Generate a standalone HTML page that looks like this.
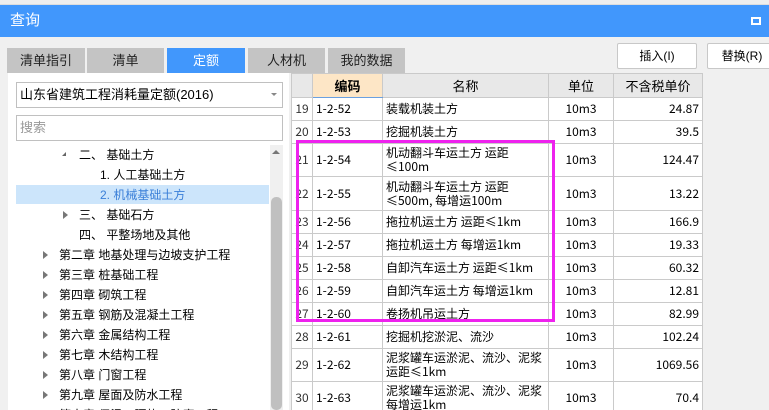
<!DOCTYPE html><html style="width:769px;height:410px;overflow:hidden"><head><meta charset="utf-8"><style>
*{box-sizing:border-box;margin:0;padding:0}
body{width:769px;height:410px;overflow:hidden;background:#f0f0f0;font-family:"Liberation Sans","Noto Sans CJK SC",sans-serif;font-size:12px;color:#000;position:relative}
.a{position:absolute}
.tab{position:absolute;top:48px;height:25px;background:#c4c4c4;text-align:center;line-height:25px;font-size:13px;color:#222}
.btn{position:absolute;top:43px;height:26px;background:#fff;border:1px solid #c8c8c8;border-radius:2px;text-align:center;line-height:24px;font-size:12px}
.tr{position:absolute;left:0;font-size:12px;white-space:nowrap;height:20px;line-height:20px}
.arr{position:absolute;width:0;height:0;border-top:4px solid transparent;border-bottom:4px solid transparent;border-left:5px solid #777}
table{position:absolute;left:291px;top:73px;border-collapse:collapse;background:#fff;font-family:"Noto Sans CJK SC",sans-serif;font-size:12px}
td,th{border:1px solid #cacaca;padding:0 3px;line-height:14px;font-weight:normal}
th{background:#e8e8e8;height:24px;font-size:13px}
td.n{text-align:center;color:#333;padding:0 1px}
td.u{text-align:center}
td.p{text-align:right}
#clip{position:absolute;left:0;top:0;width:769px;height:410px;overflow:hidden}
</style></head><body><div id="clip">
<div class="a" style="left:0;top:0;width:769px;height:5px;background:#eee;border-bottom:1px solid #ddd"></div>
<div class="a" style="left:0;top:5px;width:769px;height:32px;background:#4197fc;color:#fff;font-size:15px;line-height:32px;padding-left:10px">查询</div>
<div class="a" style="left:751px;top:17px;width:10px;height:8px;border:2px solid #fff"></div>
<div class="tab" style="left:7px;width:78px">清单指引</div>
<div class="tab" style="left:87px;width:77px">清单</div>
<div class="tab" style="left:167px;width:78px;background:#4197fc;color:#fff">定额</div>
<div class="tab" style="left:248px;width:77px">人材机</div>
<div class="tab" style="left:328px;width:77px">我的数据</div>
<div class="btn" style="left:617px;width:80px">插入(I)</div>
<div class="btn" style="left:707px;width:70px">替换(R)</div>
<div class="a" style="left:8px;top:73px;width:281px;height:337px;background:#fff"></div>
<div class="a" style="left:16px;top:82px;width:267px;height:26px;border:1px solid #c0c0c0;background:#fff;line-height:24px;padding-left:3px;font-size:13px">山东省建筑工程消耗量定额(2016)</div>
<div class="a" style="left:271px;top:93px;border-left:3px solid transparent;border-right:3px solid transparent;border-top:3px solid #888"></div>
<div class="a" style="left:16px;top:115px;width:267px;height:26px;border:1px solid #c0c0c0;background:#fff;line-height:24px;padding-left:3px;font-size:13px;color:#999">搜索</div>
<div class="a" style="left:16px;top:185px;width:253px;height:19px;background:#cce5fb"></div>
<div class="a" style="left:270px;top:145px;width:13px;height:265px;background:#f0f0f0"></div>
<div class="a" style="left:271px;top:197px;width:11px;height:213px;background:#c0c0c0;border-radius:5px"></div>
<div class="a" style="left:272px;top:150px;border-left:4px solid transparent;border-right:4px solid transparent;border-bottom:4px solid #777"></div>
<div class="a" style="left:62px;top:152px;border-left:4px solid transparent;border-bottom:4px solid #666"></div>
<div class="tr" style="left:79px;top:145px">二、&nbsp;基础土方</div>
<div class="tr" style="left:100px;top:165px">1. 人工基础土方</div>
<div class="tr" style="left:100px;top:185px;color:#3a7fd8">2. 机械基础土方</div>
<div class="arr" style="left:63px;top:211px"></div>
<div class="tr" style="left:79px;top:205px">三、&nbsp;基础石方</div>
<div class="tr" style="left:79px;top:225px">四、&nbsp;平整场地及其他</div>
<div class="arr" style="left:43px;top:251px"></div><div class="tr" style="left:59px;top:245px">第二章 地基处理与边坡支护工程</div>
<div class="arr" style="left:43px;top:271px"></div><div class="tr" style="left:59px;top:265px">第三章 桩基础工程</div>
<div class="arr" style="left:43px;top:291px"></div><div class="tr" style="left:59px;top:285px">第四章 砌筑工程</div>
<div class="arr" style="left:43px;top:311px"></div><div class="tr" style="left:59px;top:305px">第五章 钢筋及混凝土工程</div>
<div class="arr" style="left:43px;top:331px"></div><div class="tr" style="left:59px;top:325px">第六章 金属结构工程</div>
<div class="arr" style="left:43px;top:351px"></div><div class="tr" style="left:59px;top:345px">第七章 木结构工程</div>
<div class="arr" style="left:43px;top:371px"></div><div class="tr" style="left:59px;top:365px">第八章 门窗工程</div>
<div class="arr" style="left:43px;top:391px"></div><div class="tr" style="left:59px;top:385px">第九章 屋面及防水工程</div>
<div class="tr" style="left:59px;top:405px;height:5px;overflow:hidden">第十章 保温、隔热、防腐工程</div>
<table>
<colgroup><col style="width:21px"><col style="width:70px"><col style="width:166px"><col style="width:65px"><col style="width:89px"></colgroup>
<tr><th></th><th style="background:#fde6c6;font-weight:bold;border-bottom:1px solid #6aa0e0">编码</th><th>名称</th><th>单位</th><th>不含税单价</th></tr>
<tr style="height:23px"><td class="n">19</td><td>1-2-52</td><td>装载机装土方</td><td class="u">10m3</td><td class="p">24.87</td></tr>
<tr style="height:23px"><td class="n">20</td><td>1-2-53</td><td>挖掘机装土方</td><td class="u">10m3</td><td class="p">39.5</td></tr>
<tr style="height:33px"><td class="n">21</td><td>1-2-54</td><td>机动翻斗车运土方 运距<br>≤100m</td><td class="u">10m3</td><td class="p">124.47</td></tr>
<tr style="height:34px"><td class="n">22</td><td>1-2-55</td><td>机动翻斗车运土方 运距<br>≤500m, 每增运100m</td><td class="u">10m3</td><td class="p">13.22</td></tr>
<tr style="height:23px"><td class="n">23</td><td>1-2-56</td><td>拖拉机运土方 运距≤1km</td><td class="u">10m3</td><td class="p">166.9</td></tr>
<tr style="height:23px"><td class="n">24</td><td>1-2-57</td><td>拖拉机运土方 每增运1km</td><td class="u">10m3</td><td class="p">19.33</td></tr>
<tr style="height:23px"><td class="n">25</td><td>1-2-58</td><td>自卸汽车运土方 运距≤1km</td><td class="u">10m3</td><td class="p">60.32</td></tr>
<tr style="height:23px"><td class="n">26</td><td>1-2-59</td><td>自卸汽车运土方 每增运1km</td><td class="u">10m3</td><td class="p">12.81</td></tr>
<tr style="height:23px"><td class="n">27</td><td>1-2-60</td><td>卷扬机吊运土方</td><td class="u">10m3</td><td class="p">82.99</td></tr>
<tr style="height:23px"><td class="n">28</td><td>1-2-61</td><td>挖掘机挖淤泥、流沙</td><td class="u">10m3</td><td class="p">102.24</td></tr>
<tr style="height:33px"><td class="n">29</td><td>1-2-62</td><td>泥浆罐车运淤泥、流沙、泥浆<br>运距≤1km</td><td class="u">10m3</td><td class="p">1069.56</td></tr>
<tr style="height:33px"><td class="n">30</td><td>1-2-63</td><td>泥浆罐车运淤泥、流沙、泥浆<br>每增运1km</td><td class="u">10m3</td><td class="p">70.4</td></tr>
</table>
<div class="a" style="left:296px;top:140px;width:259px;height:182px;border:3px solid #ee22ee"></div>
</div></body></html>
